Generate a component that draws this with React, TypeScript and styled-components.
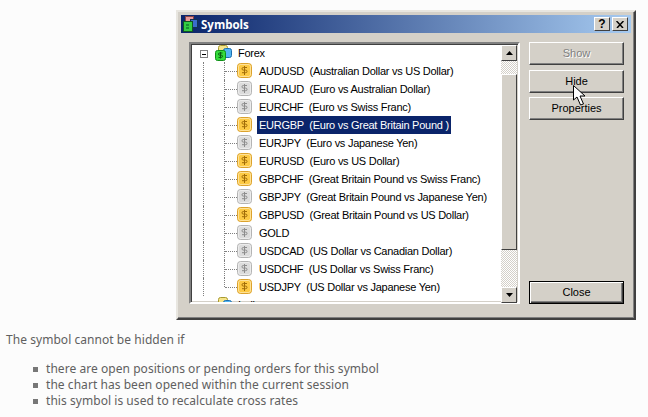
import React from "react";
import styled, { createGlobalStyle } from "styled-components";

const Global = createGlobalStyle`
  html, body { margin: 0; padding: 0; background: #fcfcfc; }
  body { width: 648px; height: 417px; overflow: hidden; font-family: "Noto Sans", "Liberation Sans", sans-serif; }
`;

const Page = styled.div`
  display: flex;
  flex-direction: column;
  padding-top: 10px;
`;

const Dialog = styled.div`
  box-sizing: border-box;
  width: 460px;
  height: 310px;
  margin-left: 176px;
  padding: 3px;
  background: #d4d0c8;
  border: 2px solid;
  border-color: #e8e6e0 #404040 #404040 #e8e6e0;
  box-shadow: inset -1px -1px 0 #808080;
`;

const TitleBar = styled.div`
  display: flex;
  align-items: center;
  height: 18px;
  padding: 0 3px 0 1px;
  background: linear-gradient(90deg, #0a246a, #a6caf0);
  color: #fff;
`;

const TitleIcon = styled.svg`
  width: 16px;
  height: 16px;
  flex: none;
`;

const TitleText = styled.span`
  flex: 1;
  margin-left: 3px;
  font: bold 11.5px "Open Sans", sans-serif;
`;

const CaptionButton = styled.button`
  box-sizing: border-box;
  display: flex;
  align-items: center;
  justify-content: center;
  width: 16px;
  height: 14px;
  margin-left: ${(p) => (p.$gap ? "2px" : "0")};
  padding: 0;
  background: #d4d0c8;
  color: #000;
  border: 1px solid;
  border-color: #fff #404040 #404040 #fff;
  font: bold 12px "Liberation Sans", sans-serif;
`;

const Body = styled.div`
  display: flex;
  gap: 9px;
  margin: 9px 7px 0 8px;
  height: 262px;
`;

const TreePanel = styled.div`
  box-sizing: border-box;
  display: flex;
  width: 331px;
  height: 262px;
  background: #fff;
  border: 2px solid;
  border-color: #808080 #fff #fff #808080;
  box-shadow: inset 1px 1px 0 #404040, inset -1px -1px 0 #d4d0c8;
  padding: 0 1px 1px 1px;
`;

const Tree = styled.div`
  flex: 1;
  min-width: 0;
  height: 258px;
  overflow: hidden;
  font: 11px "Liberation Sans", sans-serif;
  letter-spacing: -0.26px;
  color: #000;
`;

const RootRow = styled.div`
  display: flex;
  align-items: center;
  height: 18px;
  padding-left: 8px;
  white-space: pre;
`;

const Expander = styled.span`
  box-sizing: border-box;
  display: flex;
  align-items: center;
  justify-content: center;
  width: 8px;
  height: 8px;
  border: 1px solid #808080;
  background: #fff;
  margin-top: 2px;
`;

const Minus = styled.span`
  width: 4px;
  height: 1px;
  background: #000;
`;

const RootIcon = styled.svg`
  width: 17px;
  height: 16px;
  margin: 0 0 0 7px;
  flex: none;
`;

const RootLabel = styled.span`
  margin-left: 6px;
`;

const ItemRow = styled.div`
  display: flex;
  height: 18px;
  padding-left: 11px;
`;

const Guide = styled.span`
  width: 21px;
  flex: none;
  border-left: 1px dotted #808080;
  box-sizing: border-box;
`;

const Branch = styled.span`
  box-sizing: border-box;
  width: 13px;
  flex: none;
  height: ${(p) => (p.$last ? "9px" : "18px")};
  border-left: 1px dotted #808080;
  display: flex;
`;

const BranchStub = styled.span`
  width: 100%;
  height: 9px;
  border-bottom: 1px dotted #808080;
`;

const Coin = styled.svg`
  width: 16px;
  height: 16px;
  flex: none;
  margin-top: 1px;
`;

const ItemLabel = styled.span`
  margin-left: 4px;
  padding: 0 2px;
  line-height: 18px;
  height: 18px;
  white-space: pre;
  background: ${(p) => (p.$selected ? "#0a246a" : "transparent")};
  color: ${(p) => (p.$selected ? "#fff" : "#000")};
`;

const ScrollBar = styled.div`
  display: flex;
  flex-direction: column;
  width: 16px;
  flex: none;
  height: 258px;
  margin-top: 1px;
  background: repeating-conic-gradient(#fff 0 25%, #d4d0c8 0 50%) 0 0 / 2px 2px;
`;

const ScrollButton = styled.div`
  box-sizing: border-box;
  display: flex;
  align-items: center;
  justify-content: center;
  height: 16px;
  background: #d4d0c8;
  border: 1px solid;
  border-color: #fff #404040 #404040 #fff;
`;

const Thumb = styled.div`
  box-sizing: border-box;
  height: 176px;
  margin-top: 13px;
  background: #d4d0c8;
  border: 1px solid;
  border-color: #fff #404040 #404040 #fff;
`;

const Spacer = styled.div`
  flex: 1;
`;

const Arrow = styled.svg`
  width: 7px;
  height: 4px;
`;

const ButtonColumn = styled.div`
  display: flex;
  flex-direction: column;
  width: 95px;
`;

const ActionButton = styled.div`
  position: relative;
  z-index: ${(p) => (p.$raised ? 1 : 0)};
  box-sizing: border-box;
  display: flex;
  align-items: center;
  justify-content: center;
  height: 23px;
  padding-bottom: 1px;
  margin-top: ${(p) => p.$mt || 0}px;
  background: #d4d0c8;
  border: ${(p) => (p.$default ? "1px solid #000" : "1px solid")};
  border-color: ${(p) => (p.$default ? "#000" : "#fff #404040 #404040 #fff")};
  box-shadow: ${(p) =>
    p.$default
      ? "inset 1px 1px 0 #fff, inset -1px -1px 0 #404040, inset -2px -2px 0 #808080"
      : "inset -1px -1px 0 #808080"};
  color: ${(p) => (p.$disabled ? "#808080" : "#000")};
  text-shadow: ${(p) => (p.$disabled ? "1px 1px 0 #fff" : "none")};
  font: 11px "Liberation Sans", sans-serif;
`;

const Cursor = styled.svg`
  position: absolute;
  left: 43px;
  top: 14px;
  width: 13px;
  height: 21px;
`;

const Notes = styled.div`
  margin-top: 12px;
  padding-left: 6px;
  color: #606060;
  font: 12px "Noto Sans", sans-serif;
  letter-spacing: 0.05px;
`;

const Lead = styled.p`
  margin: 0;
  height: 16px;
  line-height: 16px;
`;

const BulletList = styled.ul`
  list-style: none;
  margin: 13px 0 0;
  padding: 0 0 0 27px;
`;

const BulletItem = styled.li`
  display: flex;
  align-items: center;
  height: 16px;
  line-height: 16px;
`;

const Square = styled.span`
  width: 5px;
  height: 5px;
  background: #777;
  margin-right: 8px;
  flex: none;
`;

const symbols: [string, string, boolean][] = [
  ["AUDUSD", "Australian Dollar vs US Dollar", true],
  ["EURAUD", "Euro vs Australian Dollar", false],
  ["EURCHF", "Euro vs Swiss Franc", false],
  ["EURGBP", "Euro vs Great Britain Pound ", true],
  ["EURJPY", "Euro vs Japanese Yen", false],
  ["EURUSD", "Euro vs US Dollar", true],
  ["GBPCHF", "Great Britain Pound vs Swiss Franc", true],
  ["GBPJPY", "Great Britain Pound vs Japanese Yen", false],
  ["GBPUSD", "Great Britain Pound vs US Dollar", true],
  ["GOLD", "", false],
  ["USDCAD", "US Dollar vs Canadian Dollar", false],
  ["USDCHF", "US Dollar vs Swiss Franc", false],
  ["USDJPY", "US Dollar vs Japanese Yen", true],
];

const CoinIcon = ({ active }: { active: boolean }) => {
  const fill = active ? "#fdca45" : "#dcdcdc";
  const edge = active ? "#dca22c" : "#b4b4b4";
  const ink = active ? "#a06c08" : "#8c8c8c";
  return (
    <Coin viewBox="0 0 16 16">
      <rect x="0.500" y="0.500" width="14" height="14" rx="3" fill={fill} stroke={edge} />
      <rect x="1.500" y="1.500" width="12" height="12" rx="2" fill="none" stroke="#fff" strokeOpacity=".45" />
      <path d="M10 4.500H6.300a1.300 1.300 0 0 0 0 2.600h2.400a1.300 1.300 0 0 1 0 2.600H5M7.500 3v9" fill="none" stroke={ink} />
    </Coin>
  );
};

const StackIcon = () => (
  <RootIcon viewBox="0 0 17 16">
    <rect x="3.500" y="0.500" width="9" height="8" rx="2" fill="#f6e58a" stroke="#a89a30" />
    <rect x="8.500" y="3.500" width="8" height="9" rx="2" fill="#52b5f2" stroke="#1c6fb0" />
    <rect x="0.500" y="5.500" width="10" height="10" rx="2" fill="#35dc3c" stroke="#109018" />
    <path d="M7.500 8H4.600a1 1 0 0 0 0 2.200h1.800a1 1 0 0 1 0 2.200H3.500M5.500 7v6.500" fill="none" stroke="#075a10" />
  </RootIcon>
);

export default function App() {
  return (
    <Page>
      <Global />
      <Dialog>
        <TitleBar>
          <TitleIcon viewBox="0 0 16 16">
            <rect x="3.500" y="0.500" width="8" height="6" fill="#e89a9a" stroke="#844" />
            <rect x="8.500" y="3.500" width="7" height="8" fill="#3a6ccc" stroke="#135" />
            <rect x="1.500" y="5.500" width="9" height="10" fill="#3c4" stroke="#152" />
            <path d="M4 9h3M4 12h3" stroke="#052" />
          </TitleIcon>
          <TitleText>Symbols</TitleText>
          <CaptionButton>?</CaptionButton>
          <CaptionButton $gap>
            <svg width="8" height="7" viewBox="0 0 8 7">
              <path d="M0.500 0L7 7M7.500 0L1 7" stroke="#000" strokeWidth="1.500" />
            </svg>
          </CaptionButton>
        </TitleBar>
        <Body>
          <TreePanel>
            <Tree>
              <RootRow>
                <Expander><Minus /></Expander>
                <StackIcon />
                <RootLabel>Forex</RootLabel>
              </RootRow>
              {symbols.map(([code, name, active], i) => (
                <ItemRow key={code}>
                  <Guide />
                  <Branch $last={i === symbols.length - 1}><BranchStub /></Branch>
                  <CoinIcon active={active} />
                  <ItemLabel $selected={code === "EURGBP"}>
                    {name ? `${code}  (${name})` : code}
                  </ItemLabel>
                </ItemRow>
              ))}
              <RootRow>
                <Expander><Minus /></Expander>
                <StackIcon />
                <RootLabel>Indices</RootLabel>
              </RootRow>
            </Tree>
            <ScrollBar>
              <ScrollButton>
                <Arrow viewBox="0 0 7 4"><path d="M3.500 0L7 4H0z" fill="#000" /></Arrow>
              </ScrollButton>
              <Thumb />
              <Spacer />
              <ScrollButton>
                <Arrow viewBox="0 0 7 4"><path d="M0 0H7L3.500 4z" fill="#000" /></Arrow>
              </ScrollButton>
            </ScrollBar>
          </TreePanel>
          <ButtonColumn>
            <ActionButton $disabled>Show</ActionButton>
            <ActionButton $mt={5} $raised>
              Hide
              <Cursor viewBox="0 0 13 21">
                <path d="M0.500 0.500V15L4 12L7.500 20L10.500 19L7 11H12Z" fill="#fff" stroke="#000" />
              </Cursor>
            </ActionButton>
            <ActionButton $mt={4}>Properties</ActionButton>
            <Spacer />
            <ActionButton $default>Close</ActionButton>
          </ButtonColumn>
        </Body>
      </Dialog>
      <Notes>
        <Lead>The symbol cannot be hidden if</Lead>
        <BulletList>
          <BulletItem><Square />there are open positions or pending orders for this symbol</BulletItem>
          <BulletItem><Square />the chart has been opened within the current session</BulletItem>
          <BulletItem><Square />this symbol is used to recalculate cross rates</BulletItem>
        </BulletList>
      </Notes>
    </Page>
  );
}
